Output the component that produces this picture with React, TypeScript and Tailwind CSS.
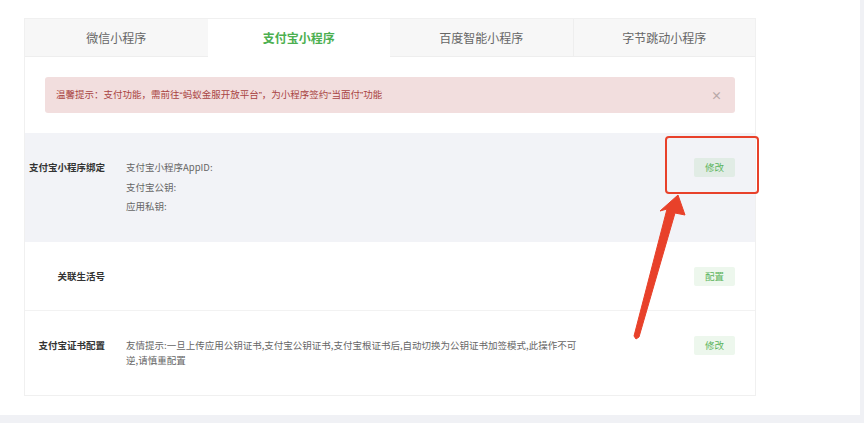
import React from "react";

const font = { fontFamily: '"Noto Sans CJK SC", "Noto Sans", sans-serif' };
const alertFont = { fontFamily: '"Liberation Sans", "Noto Sans CJK SC", sans-serif' };

function Btn({ children }: { children: React.ReactNode }) {
  return (
    <div className="flex h-[19px] w-[41px] shrink-0 items-center justify-center rounded-[2px] bg-[rgba(82,177,82,0.1)] text-[9.5px] text-[#5cb45c]">
      {children}
    </div>
  );
}

export default function App() {
  const tabs = ["微信小程序", "支付宝小程序", "百度智能小程序", "字节跳动小程序"];
  return (
    <div className="relative h-[423px] w-[864px] overflow-hidden bg-[#f0f1f5]" style={font}>
      <div className="h-[415px] w-[860px] bg-white pl-[24px] pt-[18px]">
        <div className="w-[732px] border border-[#f0f0f0]">
          <div className="grid h-[38px] grid-cols-4">
            {tabs.map((t, i) => (
              <div
                key={t}
                className={
                  i === 1
                    ? "flex items-center justify-center bg-white text-[12px] font-bold text-[#4caf50]"
                    : "flex items-center justify-center border-b border-[#eeeeee] bg-[#f7f7f7] text-[12px] text-[#666] " +
                      (i === 3 ? "border-l" : "")
                }
              >
                {t}
              </div>
            ))}
          </div>
          <div className="px-[20px] pt-[20px] pb-[20px]">
            <div className="flex h-[36px] items-center justify-between rounded-[3px] bg-[#f2dede] pl-[11px] pr-[13px] text-[9.5px] text-[#a94442]">
              <span style={alertFont}>温馨提示：支付功能，需前往“蚂蚁金服开放平台”，为小程序签约“当面付”功能</span>
              <span className="text-[11px] font-bold leading-none text-[#b8a8a8]">×</span>
            </div>
          </div>
          <div className="flex items-start bg-[#f2f3f7] pt-[25px] pb-[25px] pr-[20px]">
            <div className="w-[80px] shrink-0 text-right text-[9.5px] font-bold leading-[19.5px] text-[#333]">支付宝小程序绑定</div>
            <div className="ml-[21px] flex-1 text-[9.5px] leading-[19.5px] text-[#666]">
              <div>支付宝小程序AppID:</div>
              <div>支付宝公钥:</div>
              <div>应用私钥:</div>
            </div>
            <Btn>修改</Btn>
          </div>
          <div className="flex items-center border-b border-[#f2f2f2] pt-[25px] pb-[24px] pr-[20px]">
            <div className="w-[80px] shrink-0 text-right text-[9.5px] font-bold leading-[19.5px] text-[#333]">关联生活号</div>
            <div className="flex-1" />
            <Btn>配置</Btn>
          </div>
          <div className="flex items-start pt-[25px] pb-[27px] pr-[20px]">
            <div className="w-[80px] shrink-0 pt-[1.5px] text-right text-[9.5px] font-bold leading-[15px] text-[#333]">支付宝证书配置</div>
            <div className="ml-[21px] w-[460px] pt-[1.5px] text-[9.5px] leading-[15px] text-[#666]">
              友情提示:一旦上传应用公钥证书,支付宝公钥证书,支付宝根证书后,自动切换为公钥证书加签模式,此操作不可逆,请慎重配置
            </div>
            <div className="flex-1" />
            <Btn>修改</Btn>
          </div>
        </div>
      </div>
      <div className="absolute left-[665px] top-[136px] h-[58px] w-[94px] rounded-[4px] border-2 border-[#e8412a]" />
      <svg className="absolute left-0 top-0" width="864" height="423" viewBox="0 0 864 423">
        <polygon
          points="678,195 660,211 667,209 634,336 636,339 639,337 675,213 685,215"
          fill="#e8412a"
          strokeLinejoin="round"
          stroke="#e8412a"
          strokeWidth="1"
        />
      </svg>
    </div>
  );
}
